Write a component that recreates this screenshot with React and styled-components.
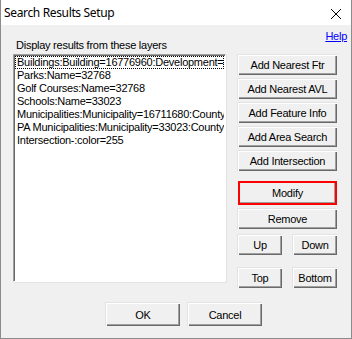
import React from "react";
import styled, { createGlobalStyle } from "styled-components";

const GlobalStyle = createGlobalStyle`
  html, body {
    margin: 0;
    padding: 0;
    background: #f0f0f0;
  }
  * {
    box-sizing: border-box;
  }
`;

const layers = [
  "Buildings:Building=16776960:Development=",
  "Parks:Name=32768",
  "Golf Courses:Name=32768",
  "Schools:Name=33023",
  "Municipalities:Municipality=16711680:County",
  "PA Municipalities:Municipality=33023:County",
  "Intersection-:color=255",
];

const addButtons = [
  "Add Nearest Ftr",
  "Add Nearest AVL",
  "Add Feature Info",
  "Add Area Search",
  "Add Intersection",
];

export default function App() {
  return (
    <>
      <GlobalStyle />
      <Window>
        <TitleBar>
          <Title>Search Results Setup</Title>
          <CloseIcon width="10" height="10" viewBox="0 0 10 10">
            <path d="M0 0 L10 10 M10 0 L0 10" stroke="#000" strokeWidth="1" />
          </CloseIcon>
        </TitleBar>

        <Body>
          <HelpRow>
            <HelpLink href="#help">Help</HelpLink>
          </HelpRow>
          <Label>Display results from these layers</Label>

          <Main>
            <ListBox>
              {layers.map((l, i) => (
                <ListItem key={l} $focused={i === 0}>
                  {l}
                </ListItem>
              ))}
            </ListBox>

            <ButtonColumn>
              {addButtons.map((b, i) => (
                <Button key={b} $mt={i === 0 ? 0 : 3}>
                  {b}
                </Button>
              ))}
              <ModifyFrame>
                <Button $flat>Modify</Button>
              </ModifyFrame>
              <Button $mt={3}>Remove</Button>
              <PairRow $mt={5}>
                <Button>Up</Button>
                <Button>Down</Button>
              </PairRow>
              <PairRow $mt={12}>
                <Button>Top</Button>
                <Button>Bottom</Button>
              </PairRow>
            </ButtonColumn>
          </Main>

          <Footer>
            <DialogButton>OK</DialogButton>
            <DialogButton>Cancel</DialogButton>
          </Footer>
        </Body>
      </Window>
    </>
  );
}

const Window = styled.div`
  width: 352px;
  height: 339px;
  border: 1px solid #8c8c8c;
  border-top: none;
  display: flex;
  flex-direction: column;
  background: #f0f0f0;
  font-family: "Liberation Sans", Arial, sans-serif;
  font-size: 11px;
  letter-spacing: -0.25px;
  color: #000;
  overflow: hidden;
`;

const TitleBar = styled.div`
  height: 25px;
  flex: none;
  background: #fff;
  display: flex;
  align-items: center;
  justify-content: space-between;
  padding: 0 10px 0 3px;
`;

const Title = styled.span`
  font-family: "Noto Sans", "Open Sans", sans-serif;
  font-size: 12px;
  letter-spacing: -0.35px;
  color: #000;
`;

const CloseIcon = styled.svg`
  display: block;
  margin-top: 2px;
`;

const Body = styled.div`
  flex: 1;
  display: flex;
  flex-direction: column;
  padding: 5px 4px 0 12px;
`;

const HelpRow = styled.div`
  display: flex;
  justify-content: flex-end;
  height: 13px;
  line-height: 13px;
`;

const HelpLink = styled.a`
  color: #0000ff;
  text-decoration: underline;
  font-size: 11px;
`;

const Label = styled.div`
  height: 13px;
  line-height: 13px;
  margin-top: -4px;
  padding-left: 3px;
`;

const Main = styled.div`
  display: grid;
  grid-template-columns: 213px 100px;
  column-gap: 11px;
  align-items: start;
  margin-top: 2px;
`;

const ListBox = styled.div`
  height: 228px;
  background: #fff;
  border-top: 1px solid #a0a0a0;
  border-left: 1px solid #a0a0a0;
  border-right: 1px solid #fff;
  border-bottom: 1px solid #fff;
  box-shadow: inset 1px 1px 0 #696969, 1px 1px 0 #e3e3e3;
  padding: 1px 1px 0 1px;
  overflow: hidden;
`;

const ListItem = styled.div`
  height: 13px;
  line-height: 13px;
  padding-left: 2px;
  white-space: nowrap;
  overflow: hidden;
  outline: ${(p) => (p.$focused ? "1px dotted #000" : "none")};
  outline-offset: -1px;
`;

const Button = styled.div`
  height: 21px;
  margin-top: ${(p) => p.$mt || 0}px;
  display: flex;
  align-items: center;
  justify-content: center;
  background: #f0f0f0;
  font-size: 11px;
  box-shadow: ${(p) =>
    p.$flat
      ? "inset -1px -1px 0 #a0a0a0"
      : "inset 1px 1px 0 #fff, inset -1px -1px 0 #696969, inset -2px -2px 0 #a0a0a0"};
  border-top: ${(p) => (p.$flat ? "none" : "1px solid #e3e3e3")};
  border-left: ${(p) => (p.$flat ? "none" : "1px solid #e3e3e3")};
  user-select: none;
`;

const ButtonColumn = styled.div`
  display: flex;
  flex-direction: column;
`;

const ModifyFrame = styled.div`
  margin-top: 10px;
  margin-left: 1px;
  border: 2px solid #ff0000;
  height: 24px;
  background: #f0f0f0;

  & > ${Button} {
    height: 20px;
  }
`;

const PairRow = styled.div`
  display: grid;
  grid-template-columns: 45px 45px;
  justify-content: space-between;
  margin-top: ${(p) => p.$mt}px;
`;

const Footer = styled.div`
  display: flex;
  gap: 7px;
  padding-left: 92px;
  margin-top: 14px;
`;

const DialogButton = styled(Button)`
  width: 75px;
  height: 24px;
`;
